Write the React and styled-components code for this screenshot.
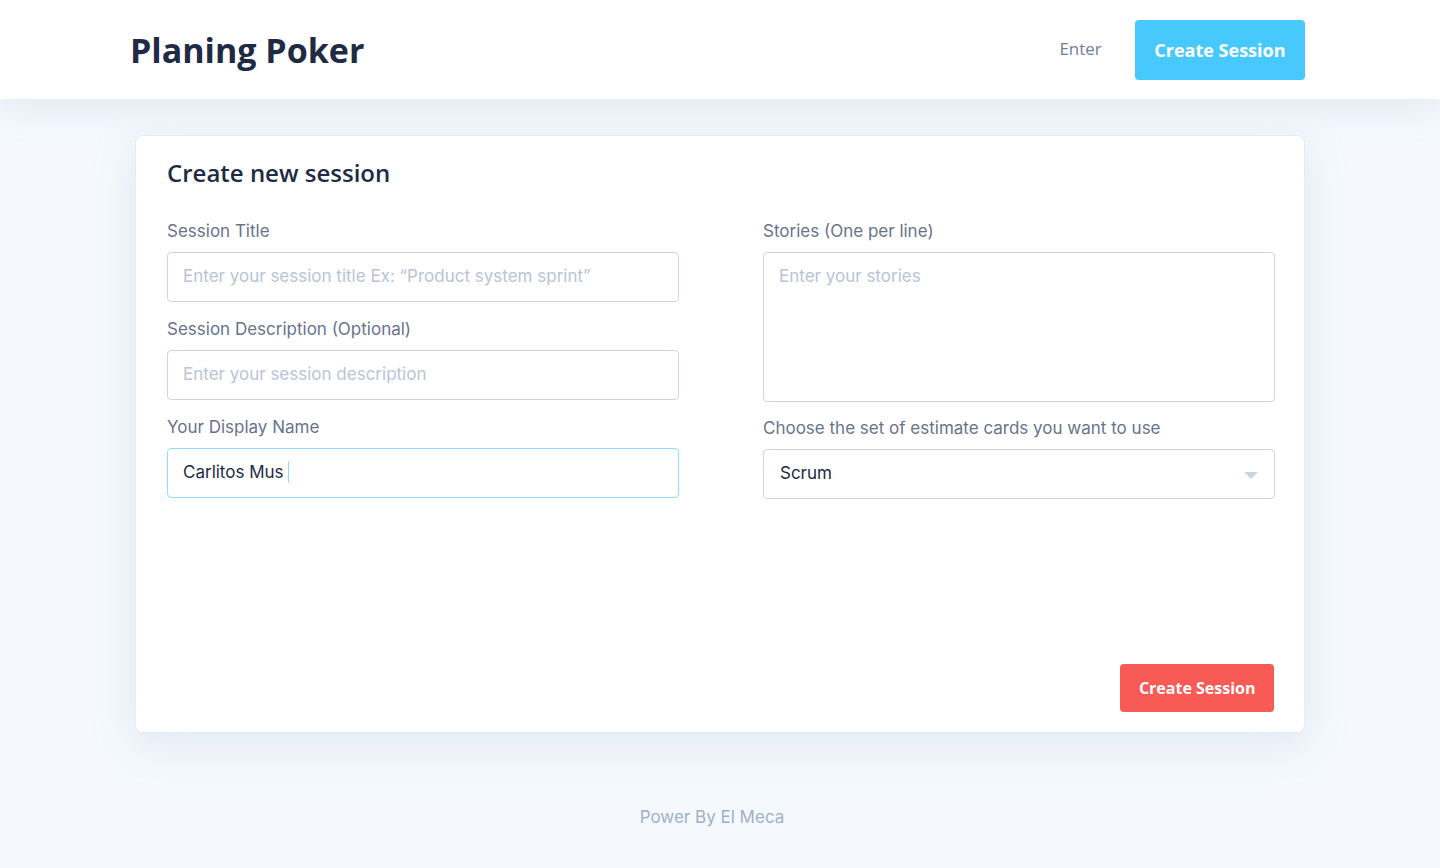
import styled, { createGlobalStyle } from "styled-components";

const GlobalStyle = createGlobalStyle`
  * { box-sizing: border-box; }
  body {
    margin: 0;
    background: #f5f9fd;
    font-family: "Open Sans", sans-serif;
  }
`;

const Page = styled.div`
  min-height: 868px;
  display: flex;
  flex-direction: column;
`;

const Header = styled.header`
  height: 99px;
  background: #ffffff;
  box-shadow: 0 10px 30px rgba(160, 180, 210, 0.22);
  position: relative;
  z-index: 1;
`;

const HeaderInner = styled.div`
  height: 100%;
  display: flex;
  align-items: center;
  justify-content: space-between;
  padding: 0 135px 0 130px;
`;

const Brand = styled.h1`
  margin: 0;
  font-family: "Open Sans", sans-serif;
  font-weight: 700;
  font-size: 34px;
  color: #1f2a44;
`;

const Nav = styled.nav`
  display: flex;
  align-items: center;
  gap: 33px;
`;

const NavLink = styled.a`
  font-family: "Open Sans", sans-serif;
  font-size: 17px;
  color: #718096;
  text-decoration: none;
  margin-top: -3px;
`;

const Button = styled.button`
  border: none;
  border-radius: 4px;
  color: #ffffff;
  font-family: "Open Sans", sans-serif;
  font-weight: 700;
  cursor: pointer;
  background: ${(p) => (p.$variant === "danger" ? "#f85a55" : "#48c9fe")};
  font-size: ${(p) => (p.$variant === "danger" ? "16px" : "18px")};
  height: ${(p) => (p.$variant === "danger" ? "48px" : "60px")};
  padding: 0 ${(p) => (p.$variant === "danger" ? "18.5px" : "19.5px")};
`;

const Main = styled.main`
  flex: 1;
  padding-top: 36px;
`;

const Card = styled.section`
  width: 1170px;
  margin: 0 auto;
  background: #ffffff;
  border: 1px solid #e6ecf4;
  border-radius: 8px;
  box-shadow: 0 12px 40px rgba(170, 190, 220, 0.28);
  padding: 20px 30px 20px 31px;
  height: 598px;
  display: flex;
  flex-direction: column;
`;

const CardTitle = styled.h2`
  margin: 0;
  font-family: "Open Sans", sans-serif;
  font-weight: 600;
  font-size: 24px;
  line-height: 33px;
  color: #1f2a44;
`;

const Grid = styled.div`
  margin-top: 30px;
  display: grid;
  grid-template-columns: 512px 512px;
  column-gap: 84px;
`;

const Column = styled.div`
  display: flex;
  flex-direction: column;
`;

const Field = styled.div`
  display: flex;
  flex-direction: column;
  margin-bottom: ${(p) => p.$mb || "15px"};
`;

const Label = styled.label`
  font-family: Inter, "Noto Sans", sans-serif;
  font-size: 17px;
  line-height: 24px;
  color: #68738a;
  margin-bottom: 9px;
`;

const inputBase = `
  width: 100%;
  border: 1px solid #cbd5e0;
  border-radius: 4px;
  background: #ffffff;
  font-family: Inter, "Noto Sans", sans-serif;
  font-size: 17px;
  color: #1f2a44;
  outline: none;
  padding: 0 15px;
  &::placeholder { color: #b8c4d6; }
`;

const Input = styled.input`
  ${inputBase}
  height: 50px;
  padding-bottom: 2px;
`;

const TextArea = styled.textarea`
  ${inputBase}
  height: 150px;
  padding: 11px 15px;
  resize: none;
  line-height: 24px;
`;

const FocusBox = styled.div`
  ${inputBase}
  height: 50px;
  border-color: #8fdcfc;
  display: flex;
  align-items: center;
  padding-bottom: 2px;
`;

const Caret = styled.span`
  display: inline-block;
  width: 1px;
  height: 22px;
  margin-left: 4px;
  background: #8fdcfc;
`;

const SelectBox = styled.div`
  ${inputBase}
  height: 50px;
  display: flex;
  align-items: center;
  justify-content: space-between;
  padding: 0 16px 2px 16px;
`;

const Arrow = styled.span`
  width: 0;
  height: 0;
  border-left: 7px solid transparent;
  border-right: 7px solid transparent;
  border-top: 7px solid #cbd5e0;
  margin-top: 4px;
`;

const Actions = styled.div`
  margin-top: auto;
  display: flex;
  justify-content: flex-end;
`;

const Footer = styled.footer`
  height: 135px;
  display: flex;
  align-items: center;
  justify-content: center;
  padding: 32px 16px 0 0;
  font-family: Inter, "Noto Sans", sans-serif;
  font-size: 17px;
  color: #a0b0c8;
`;

export default function App() {
  return (
    <Page>
      <GlobalStyle />
      <Header>
        <HeaderInner>
          <Brand>Planing Poker</Brand>
          <Nav>
            <NavLink href="#">Enter</NavLink>
            <Button>Create Session</Button>
          </Nav>
        </HeaderInner>
      </Header>

      <Main>
        <Card>
          <CardTitle>Create new session</CardTitle>
          <Grid>
            <Column>
              <Field>
                <Label>Session Title</Label>
                <Input placeholder="Enter your session title Ex: “Product system sprint”" />
              </Field>
              <Field>
                <Label>Session Description (Optional)</Label>
                <Input placeholder="Enter your session description" />
              </Field>
              <Field>
                <Label>Your Display Name</Label>
                <FocusBox>
                  Carlitos Mus
                  <Caret />
                </FocusBox>
              </Field>
            </Column>
            <Column>
              <Field $mb="14px">
                <Label>Stories (One per line)</Label>
                <TextArea placeholder="Enter your stories" />
              </Field>
              <Field>
                <Label>Choose the set of estimate cards you want to use</Label>
                <SelectBox>
                  Scrum
                  <Arrow />
                </SelectBox>
              </Field>
            </Column>
          </Grid>
          <Actions>
            <Button $variant="danger">Create Session</Button>
          </Actions>
        </Card>
      </Main>

      <Footer>Power By El Meca</Footer>
    </Page>
  );
}
